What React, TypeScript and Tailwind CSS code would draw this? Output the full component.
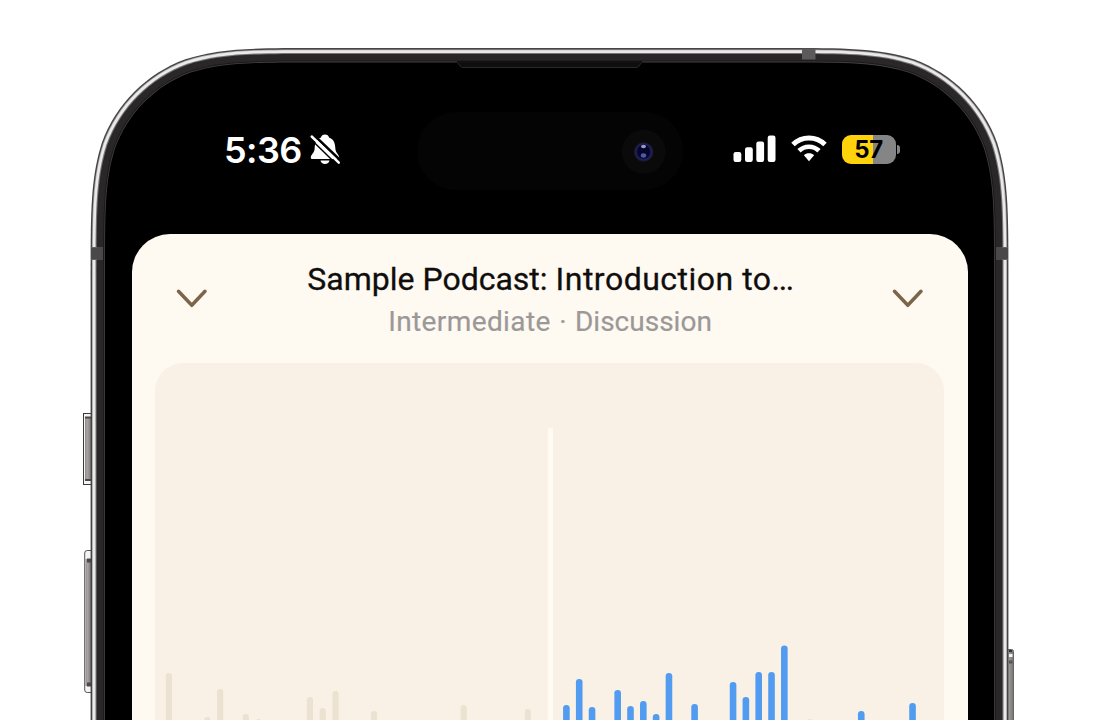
import React from "react";

// heights in px, measured from the bottom of the visible area
const PLAYED = [47, 0, 0, 3, 31, 0, 6, 1, 0, 0, 0, 23, 12, 29, 0, 0, 9, 0, 0, 0, 0, 0, 0, 15, 0, 0, 0, 0, 11];
const UPCOMING = [15, 41, 13, 0, 30, 14, 19, 6, 47, 0, 16, 0, 0, 38, 23, 48, 48, 74.5, 0, 1, 0, 0, 0, 9, 0, 0, 0, 17];

// rounded outline with continuous corners, open below the window
const outline = (inset, radius) => {
  const l = 90.6 + inset;
  const r = 1008.4 - inset;
  const t = 48 + inset;
  const R = radius - inset;
  const k = (n) => n * R;
  return [
    `M${l} 760 V${t + k(1.5287)}`,
    `C${l} ${t + k(1.0885)} ${l} ${t + k(0.8684)} ${l + k(0.0749)} ${t + k(0.6315)}`,
    `C${l + k(0.1691)} ${t + k(0.3728)} ${l + k(0.3728)} ${t + k(0.1691)} ${l + k(0.6315)} ${t + k(0.0749)}`,
    `C${l + k(0.8684)} ${t} ${l + k(1.0885)} ${t} ${l + k(1.5287)} ${t}`,
    `H${r - k(1.5287)}`,
    `C${r - k(1.0885)} ${t} ${r - k(0.8684)} ${t} ${r - k(0.6315)} ${t + k(0.0749)}`,
    `C${r - k(0.3728)} ${t + k(0.1691)} ${r - k(0.1691)} ${t + k(0.3728)} ${r - k(0.0749)} ${t + k(0.6315)}`,
    `C${r} ${t + k(0.8684)} ${r} ${t + k(1.0885)} ${r} ${t + k(1.5287)}`,
    "V760 Z",
  ].join(" ");
};

const PhoneFrame = () => (
  <svg className="absolute inset-0" width="1100" height="720" viewBox="0 0 1100 720">
    <defs>
      <linearGradient id="button" x1="0" x2="1" y1="0" y2="0">
        <stop offset="0" stopColor="#8d8989" />
        <stop offset="0.3" stopColor="#aaa5a5" />
        <stop offset="1" stopColor="#777272" />
      </linearGradient>
      <radialGradient id="lens" cx="0.5" cy="0.5" r="0.5">
        <stop offset="0" stopColor="#10104a" />
        <stop offset="0.6" stopColor="#0b0b3c" />
        <stop offset="0.78" stopColor="#222258" />
        <stop offset="1" stopColor="#101018" />
      </radialGradient>
    </defs>

    {/* side buttons */}
    <rect x="83.5" y="413.5" width="9" height="71" fill="#f4f4f4" stroke="#3a3a3a" />
    <rect x="85" y="417" width="7" height="64" fill="url(#button)" />
    <path d="M85 417.5h7M85 480h7" stroke="#4d4848" strokeWidth="2" />
    <rect x="84.7" y="550.5" width="9" height="142" rx="2.5" fill="#f4f4f4" stroke="#555" />
    <rect x="85.5" y="559" width="6" height="127" fill="url(#button)" />
    <path d="M87 560.5h5M87 684.5h5" stroke="#4d4848" strokeWidth="4" />
    <rect x="1005" y="649.5" width="8.5" height="90" rx="2" fill="url(#button)" stroke="#666" />
    <path d="M1009 651h3" stroke="#333" strokeWidth="2" />
    <path d="M1009 655.5h3.5" stroke="#f2f2f2" strokeWidth="3" />
    <path d="M1009 662h3.5" stroke="#555" strokeWidth="3" />

    {/* metal band and bezel */}
    <path d={outline(0, 150)} fill="#454343" />
    <path d={outline(1.4, 150)} fill="#a8a8a8" />
    <path d={outline(2.2, 150)} fill="#e9eae9" />
    <path d={outline(4.9, 150)} fill="#777575" />
    <path d={outline(6, 150)} fill="#292727" />
    <path d={outline(12.6, 150)} fill="#1b1a1a" />
    <path d={outline(13.6, 150)} fill="#444141" />
    <path d={outline(14.4, 150)} fill="#000" />

    {/* antenna lines */}
    <path d="M802 48.5h13.500v11H802z" fill="#5d5a5b" />
    <path d="M91 247h12v13H91zM996 247h12v13h-12z" fill="#4a4848" />
    <path d="M91 247.5h6M91 259.5h6M1002 247.5h6M1002 259.5h6" stroke="#646161" />

    {/* speaker */}
    <path d="M457 62 L460 66 Q461 67.5 463 67.5 H636 Q638 67.5 639 66 L642 62 Z" fill="#0e0e0e" stroke="#2b2928" />
    <path d="M457 61h185v1.7H457z" fill="#111010" />

    {/* dynamic island */}
    <rect x="417" y="112" width="266" height="78" rx="39" fill="#040404" />
    <circle cx="643.7" cy="151.7" r="22" fill="#0a0a0b" />
    <circle cx="643.7" cy="152" r="10" fill="url(#lens)" />
    <ellipse cx="643.5" cy="151.5" rx="6" ry="7" fill="#06062c" />
    <ellipse cx="643.5" cy="146.5" rx="2.500" ry="1.700" fill="#9a9ac4" />
    <ellipse cx="643.5" cy="155.5" rx="2.700" ry="2.200" fill="#4a5ca2" />
  </svg>
);

const BellOff = () => (
  <svg width="34" height="34" viewBox="0 0 34 34">
    <path
      d="M17 1.500c-2.200 0-3.700 1.200-4 3C8.700 6 6.800 9.800 6.700 15c-.1 5-3.900 6.500-3.900 9.500 0 1 .7 1.500 1.700 1.500h25c1 0 1.700-.5 1.700-1.500 0-3-3.800-4.500-3.900-9.500-.1-5.200-2-9-6.300-10.500C20.700 2.700 19.200 1.500 17 1.500z"
      fill="#fff"
    />
    <path d="M12.500 27.500h9c-.4 2.200-2.100 3.500-4.500 3.500s-4.100-1.300-4.500-3.500z" fill="#fff" />
    <path d="M5.500 1.700 33 28" stroke="#000" strokeWidth="2.600" />
    <path d="M3.700 3.500 30.800 29.700" stroke="#fff" strokeWidth="2.500" strokeLinecap="round" />
    <path d="M1.800 5.200 28.500 31.200" stroke="#000" strokeWidth="1.500" />
  </svg>
);

const Signal = () => (
  <svg width="43" height="28" viewBox="0 0 43 28">
    <rect x="0.500" y="17" width="7.800" height="10" rx="2.200" fill="#fff" />
    <rect x="12" y="12.200" width="7.800" height="14.800" rx="2.200" fill="#fff" />
    <rect x="23.300" y="6.500" width="7.800" height="20.500" rx="2.200" fill="#fff" />
    <rect x="34.700" y="0.500" width="7.800" height="26.500" rx="2.200" fill="#fff" />
  </svg>
);

const Wifi = () => (
  <svg width="36" height="28" viewBox="0 0 36 28" fill="none" stroke="#fff">
    <path d="M2 9.500C11 .7 25 .7 34 9.500" strokeWidth="5" />
    <path d="M8 15.800c5.600-5.400 14.400-5.400 20 0" strokeWidth="4.700" />
    <path d="M18 18.300c2 0 3.700.6 5.100 1.900L18 26.200l-5.100-6c1.400-1.300 3.100-1.900 5.100-1.900z" fill="#fff" stroke="none" />
  </svg>
);

const Battery = () => (
  <div className="flex items-center gap-[1px]">
    <div className="flex h-[29px] w-[54px] items-center justify-center rounded-[9px] bg-[linear-gradient(to_right,#fed30b_57%,#858585_57%)] pr-[1px] pt-[1.500px] font-['Inter'] text-[24px] font-bold leading-none tracking-[-0.3px] text-black">
      57
    </div>
    <div className="h-[9px] w-[3px] rounded-r-full bg-[#858585]" />
  </div>
);

const Chevron = () => (
  <svg width="32" height="20" viewBox="0 0 32 20" fill="none">
    <path
      d="M2.500 3.300 15.800 17.300 29 3.300"
      stroke="#7c6649"
      strokeWidth="3.500"
      strokeLinecap="round"
      strokeLinejoin="round"
    />
  </svg>
);

const Waveform = () => (
  <svg width="789" height="357" viewBox="155 363 789 357">
    <rect x="547.700" y="428" width="5.300" height="300" rx="2" fill="#fffaf2" />
    {PLAYED.map((h, i) =>
      h > 0 ? (
        <rect key={i} x={165.8 + i * 12.82} y={720 - h} width="6.200" height={h + 8} rx="3" fill="#ece2d1" />
      ) : null
    )}
    {UPCOMING.map((h, i) =>
      h > 0 ? (
        <rect
          key={i}
          x={563.1 + i * 12.82}
          y={720 - h}
          width="6.600"
          height={h + 8}
          rx="3.300"
          fill={i === 19 ? "#ece2d1" : "#519bf1"}
        />
      ) : null
    )}
  </svg>
);

const App = () => {
  return (
    <div className="relative h-[720px] w-[1100px] overflow-hidden bg-white">
      <PhoneFrame />
      <div className="relative mx-auto flex h-full w-[836px] flex-col">
        <header className="flex h-[234px] items-start justify-between pl-[92px] pr-[68px] pt-[130px]">
          <div className="flex h-[40px] items-center gap-[6px]">
            <span className="w-[78px] whitespace-nowrap font-['Inter'] text-[36px] font-semibold leading-none tracking-[-0.6px] text-white">
              5:36
            </span>
            <BellOff />
          </div>
          <div className="flex h-[38px] items-center gap-[15px]">
            <Signal />
            <Wifi />
            <Battery />
          </div>
        </header>

        <main className="flex flex-1 flex-col rounded-t-[38px] bg-[#fef9f1]">
          <div className="flex h-[129px] w-full items-start justify-between px-[44px] pt-[24px]">
            <button type="button" className="mt-[30px]">
              <Chevron />
            </button>
            <div className="flex flex-col items-center font-['Roboto']">
              <h1 className="whitespace-nowrap text-[32px] leading-[42px] text-[#100e0c] [-webkit-text-stroke:0.3px_#100e0c]">
                Sample Podcast: <span className="tracking-[0.5px]">Introduction to</span>
                <span className="tracking-[-1.4px]">...</span>
              </h1>
              <p className="whitespace-nowrap text-[28px] leading-[43px] text-[#9b9898] [-webkit-text-stroke:0.2px_#9b9898]">
                <span className="tracking-[0.4px]">Intermediate</span>
                <span className="px-[1.500px]"> · </span>
                Discussion
              </p>
            </div>
            <button type="button" className="mt-[30px]">
              <Chevron />
            </button>
          </div>
          <section className="ml-[23px] w-[789px] flex-1 overflow-hidden rounded-t-[28px] bg-[#f9f1e6]">
            <Waveform />
          </section>
        </main>
      </div>
    </div>
  );
};

export default App;
